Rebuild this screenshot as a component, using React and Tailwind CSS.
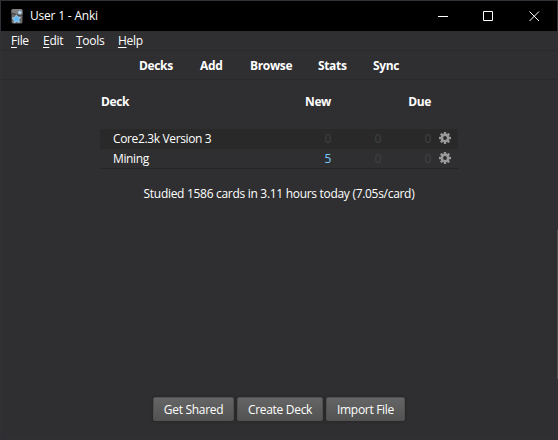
const menus = [
  { label: 'File', box: 'w-8' },
  { label: 'Edit', box: 'w-[33px]' },
  { label: 'Tools', box: 'w-[42px]' },
  { label: 'Help', box: 'w-10' },
];

const links = [
  { label: 'Decks', box: 'w-[61px]' },
  { label: 'Add', box: 'w-[50px]' },
  { label: 'Browse', box: 'w-[68px]' },
  { label: 'Stats', box: 'w-[55px]' },
  { label: 'Sync', box: 'w-8' },
];

const decks = [
  { name: 'Core2.3k Version 3', fresh: 0, learn: 0, due: 0, row: 'bg-[#292929]' },
  { name: 'Mining', fresh: 5, learn: 0, due: 0, row: 'border-b border-[#252526]' },
];

const actions = [
  { label: 'Get Shared', box: 'w-[81px]' },
  { label: 'Create Deck', box: 'w-[86px]' },
  { label: 'Import File', box: 'w-[79px]' },
];

function AnkiIcon() {
  return (
    <svg width="12" height="15" viewBox="0 0 12 15" className="shrink-0">
      <rect x=".5" width="11" height="14.500" rx="1.500" fill="#6a6a6a" />
      <path d="M1.500 0h9l1 1.500v4l-5 1.500-6-3V1z" fill="#808080" />
      <path d="M.5 3.500l4 1 4 1.500 3-1v1.500l-3 1-5-1.500-3-.8z" fill="#4c4c4c" />
      <path d="M5.300 5.800l1.500 2.200 2.900.4-1.800 2.200.5 2.800-2.800-.9-2.600 1.400.1-2.900-2-2 2.800-.7z" fill="#62b9f3" stroke="#c0e3fb" strokeWidth=".6" />
      <path d="M8.700 1.300l.8 1.200 1.500.2-1 1.200.2 1.500-1.400-.6-1.400.7.2-1.600-1-1.100 1.500-.3z" fill="#b4e0fc" />
    </svg>
  );
}

function Gear() {
  return (
    <svg width="12" height="12" viewBox="-6 -6 12 12" className="shrink-0">
      <g fill="#999">
        {[0, 45, 90, 135].map((a) => (
          <rect key={a} x="-1.2" y="-6" width="2.4" height="12" rx=".3" transform={`rotate(${a})`} />
        ))}
      </g>
      <circle r="3.2" fill="none" stroke="#999" strokeWidth="2.4" />
      <circle r="1.9" fill="#2c2c2d" />
    </svg>
  );
}

function Count({ value, box }) {
  return (
    <span className={`${box} text-right ${value ? 'text-[#77ccff]' : 'text-[#414142]'}`}>{value}</span>
  );
}

export default function App() {
  return (
    <div className="relative flex h-[440px] w-[558px] flex-col border border-[#303136] bg-[#2f2f31] font-['Open_Sans','Noto_Sans',sans-serif] text-[12px] leading-4 tracking-[-0.3px] whitespace-nowrap text-white">
      <header className="flex h-[30px] shrink-0 items-center bg-black pl-[10px]">
        <AnkiIcon />
        <span className="ml-[7px] tracking-[-0.2px]">User 1 - Anki</span>
        <div className="ml-auto flex items-center pr-[17px]">
          <svg width="102" height="12" viewBox="0 0 102 12" fill="none" stroke="#fff">
            <path d="M0 6.500h10M45.500 1.500h9v9h-9z" />
            <path d="M91.500 1.500l9.500 9.500M101 1.500l-9.500 9.500" />
          </svg>
        </div>
      </header>
      <nav className="flex h-5 shrink-0 items-center border-b border-[#29292a] pl-[10px]">
        {menus.map(({ label, box }) => (
          <span key={label} className={`${box} shrink-0`}>
            <span className="underline underline-offset-2">{label[0]}</span>
            {label.slice(1)}
          </span>
        ))}
      </nav>
      <nav className="flex h-[29px] shrink-0 items-center border-b border-[#29292a] pt-0.5 pl-[138px] font-bold tracking-[-0.35px]">
        {links.map(({ label, box }) => (
          <span key={label} className={`${box} shrink-0`}>{label}</span>
        ))}
      </nav>
      <main className="ml-[99px] w-[358px] flex-1">
        <div className="flex pt-[14px] pb-[19px] font-bold tracking-[-0.4px]">
          <span className="w-[156px] pl-px">Deck</span>
          <span className="w-[75px] text-right">New</span>
          <span className="w-[100px] text-right">Due</span>
        </div>
        {decks.map((d) => (
          <div key={d.name} className={`flex h-5 items-center pl-[13px] ${d.row}`}>
            <span className="w-[168px] tracking-[-0.36px]">{d.name}</span>
            <Count value={d.fresh} box="w-[50px]" />
            <Count value={d.learn} box="w-[50px]" />
            <Count value={d.due} box="w-[50px]" />
            <span className="ml-2 pb-0.5"><Gear /></span>
          </div>
        ))}
        <p className="mt-[17px] text-center">Studied 1586 cards in 3.11 hours today (7.05s/card)</p>
      </main>
      <footer className="mb-[18px] ml-[152px] flex gap-[3px]">
        {actions.map(({ label, box }) => (
          <button key={label} className={`${box} h-6 rounded-[2px] border border-[#505051] bg-linear-to-b from-[#656565] to-[#535353] pt-0.5 text-center shadow-[0_0_3px_#222]`}>
            {label}
          </button>
        ))}
      </footer>
      <div className="absolute top-[229px] -right-px h-[149px] w-px bg-[#505152]" />
    </div>
  );
}
